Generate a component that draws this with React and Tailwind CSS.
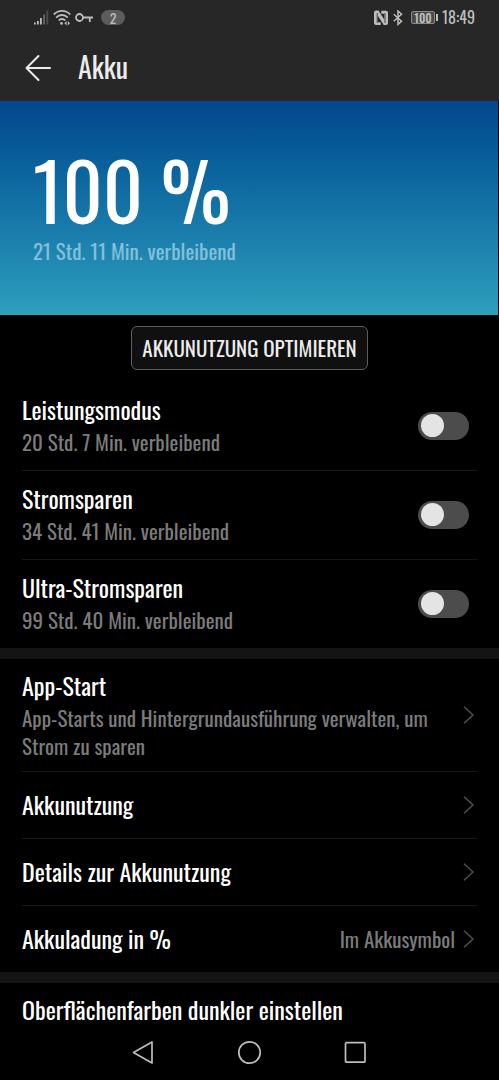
import { useState } from "react";

const MODES = [
	{ id: "performance", title: "Leistungsmodus", remaining: "20 Std. 7 Min. verbleibend" },
	{ id: "saver", title: "Stromsparen", remaining: "34 Std. 41 Min. verbleibend" },
	{ id: "ultra", title: "Ultra-Stromsparen", remaining: "99 Std. 40 Min. verbleibend" },
];

function SignalIcon() {
	return (
		<svg className="h-4 w-4" viewBox="0 0 16 16" fill="#bdbdbd" aria-hidden="true">
			<rect x="1" y="12.5" width="1.8" height="2" />
			<rect x="4" y="11" width="1.8" height="3.5" />
			<rect x="7" y="8" width="1.8" height="6.5" />
			<rect x="10.2" y="4.5" width="1.8" height="10" fill="#666" />
			<rect x="13.4" y="0.5" width="1.8" height="14" fill="#4c4c4c" />
		</svg>
	);
}

function WifiIcon() {
	return (
		<svg className="h-4 w-[18px]" viewBox="0 0 18 16" fill="none" stroke="#bdbdbd" strokeWidth="1.8" aria-hidden="true">
			<path d="M.8 4.500C5.500-.3 12.500-.3 17.200 4.500" />
			<path d="M3.200 7.600c3.300-3.500 8.300-3.500 11.600 0" />
			<path d="M5.700 10.500c1.900-2 4.700-2 6.600 0" />
			<circle cx="8.500" cy="13.400" r="1.400" fill="#bdbdbd" stroke="none" />
			<path d="M13.600 11v4.400l-2.200-2.200zM14.800 11l2.200 2.200-2.200 2.200z" fill="#bdbdbd" stroke="none" />
		</svg>
	);
}

function KeyIcon() {
	return (
		<svg className="h-4 w-[18px]" viewBox="0 0 18 16" fill="none" stroke="#bdbdbd" strokeWidth="1.8" aria-hidden="true">
			<circle cx="4.500" cy="7.500" r="3.500" />
			<path d="M8 7.500h10M14.800 7.500v4.500" />
		</svg>
	);
}

function NfcIcon() {
	return (
		<svg className="h-4 w-4" viewBox="0 0 16 16" aria-hidden="true">
			<path d="M3 .5h2.500l5.700 9V3.800H8.300V.8H13Q15 .8 15 2.800V13q0 2-2 2h-2.200L4.800 5.800v6.400h2.900V15H3q-2 0-2-2V2.500q0-2 2-2z" fill="#bdbdbd" />
			<path d="M4.200 3v10M12 3v10" stroke="#272727" strokeWidth=".8" fill="none" />
		</svg>
	);
}

function BluetoothIcon() {
	return (
		<svg className="h-4 w-[10px]" viewBox="0 0 10 16" fill="none" stroke="#bdbdbd" strokeWidth="1.500" aria-hidden="true">
			<path d="M.8 4.200l7.700 7L5 14.400V1l3.500 3.200-7.700 7" />
		</svg>
	);
}

function StatusBar() {
	return (
		<div className="flex h-[35px] items-center justify-between pl-[33px] pr-6 text-[#bdbdbd]">
			<div className="flex items-center gap-1">
				<SignalIcon />
				<WifiIcon />
				<KeyIcon />
				<span className="ml-1 flex h-[15px] w-6 items-center justify-center rounded-full bg-[#5c5c5c] text-sm leading-none">2</span>
			</div>
			<div className="flex items-center gap-1">
				<NfcIcon />
				<BluetoothIcon />
				<span className="ml-1 flex items-center gap-px">
					<span className="flex h-[13px] w-6 items-center justify-center rounded-xs border border-[#8a8a8a] bg-[#4a4a4a] text-xs leading-none font-medium">
						100
					</span>
					<span className="h-[7px] w-0.5 bg-[#bdbdbd]" />
				</span>
				<span className="pb-px text-base leading-4">18:49</span>
			</div>
		</div>
	);
}

function Chevron() {
	return (
		<svg className="h-6 w-5 shrink-0" viewBox="0 0 20 24" fill="none" stroke="#4f4f4f" strokeWidth="1.500" aria-hidden="true">
			<path d="M7 3.700 16 12l-9 8.300" />
		</svg>
	);
}

function ModeRow({ mode, checked, onChange }) {
	return (
		<li className="border-b border-[#171717] last:border-b-0">
			<label htmlFor={mode.id} className="flex items-center justify-between">
				<span className="pt-2 pb-3.5">
					<span className="block text-2xl leading-[38px] text-white">{mode.title}</span>
					<span className="block text-[21px] leading-7 text-[#7b7b7b]">{mode.remaining}</span>
				</span>
				<input
					id={mode.id}
					type="checkbox"
					role="switch"
					checked={checked}
					onChange={onChange}
					className="mr-2 h-7 w-[51px] shrink-0 appearance-none rounded-full bg-[#4c4c4c] before:mt-0.5 before:ml-[3px] before:block before:size-[23px] before:rounded-full before:bg-[#e4e4e4] checked:bg-[#1c7da8] checked:before:ml-[25px]"
				/>
			</label>
		</li>
	);
}

function LinkRow({ title, value }) {
	return (
		<li className="border-b border-[#171717] last:border-b-0">
			<a href="#" className="flex h-[66px] items-center justify-between">
				<span className="pb-0.5 text-2xl leading-9 text-white">{title}</span>
				<span className="flex items-center gap-0.5 text-[21px] leading-7 text-[#7b7b7b]">
					{value}
					<Chevron />
				</span>
			</a>
		</li>
	);
}

export default function App() {
	const [active, setActive] = useState(null);

	return (
		<div className="flex h-screen flex-col bg-black font-['Oswald','Liberation_Sans_Narrow','Roboto',sans-serif]">
			<header className="bg-[#272727]">
				<StatusBar />
				<div className="flex h-[66px] items-center gap-[26px] pl-[25px]">
					<button type="button" aria-label="Zurück">
						<svg className="h-7 w-[27px]" viewBox="0 0 27 28" fill="none" stroke="#ececec" strokeWidth="2" strokeLinecap="round" strokeLinejoin="round" aria-hidden="true">
							<path d="M25 14H1.500M13.500 2l-12 12 12 12" />
						</svg>
					</button>
					<h1 className="pb-0.5 text-[28px] leading-9 text-[#ececec]">Akku</h1>
				</div>
			</header>

			<main className="flex-1 overflow-hidden">
				<section className="mr-px h-[214px] bg-linear-to-b from-[#02478d] to-[#2e9fbd] px-[33px] pt-12">
					<p className="text-[78px] leading-20 text-white">100 %</p>
					<p className="mt-2 text-[21px] leading-7 text-[#82c0dc]">21 Std. 11 Min. verbleibend</p>
				</section>

				<div className="flex justify-center pt-[11px] pb-3">
					<button type="button" className="h-11 rounded-md border border-[#5e5e5e] bg-[#101010] px-2.5 text-[21px] text-[#ececec]">
						AKKUNUTZUNG OPTIMIEREN
					</button>
				</div>

				<ul className="mx-[22px]">
					{MODES.map((mode) => (
						<ModeRow
							key={mode.id}
							mode={mode}
							checked={active === mode.id}
							onChange={() => setActive(active === mode.id ? null : mode.id)}
						/>
					))}
				</ul>

				<ul className="border-y-[11px] border-[#141414] px-[22px]">
					<li className="border-b border-[#171717]">
						<a href="#" className="flex items-center justify-between">
							<span className="pt-[7px] pb-[11px]">
								<span className="block text-2xl leading-[38px] text-white">App-Start</span>
								<span className="block max-w-[420px] text-[21px] leading-7 text-[#7b7b7b]">
									App-Starts und Hintergrundausführung verwalten, um Strom zu sparen
								</span>
							</span>
							<Chevron />
						</a>
					</li>
					<LinkRow title="Akkunutzung" />
					<LinkRow title="Details zur Akkunutzung" />
					<LinkRow title="Akkuladung in %" value="Im Akkusymbol" />
				</ul>

				<a href="#" className="block px-[22px] pt-2 text-2xl leading-9 text-white">
					Oberflächenfarben dunkler einstellen
				</a>
			</main>

			<nav className="flex h-[51px] items-center justify-center gap-20 bg-black pb-1">
				<button type="button" aria-label="Zurück">
					<svg className="size-[26px]" viewBox="0 0 26 26" fill="none" stroke="#bdbdbd" strokeWidth="1.700" strokeLinejoin="round" aria-hidden="true">
						<path d="M21 2v21L2.500 12.500z" />
					</svg>
				</button>
				<button type="button" aria-label="Startbildschirm">
					<svg className="size-[26px]" viewBox="0 0 26 26" fill="none" stroke="#bdbdbd" strokeWidth="1.700" aria-hidden="true">
						<circle cx="12.500" cy="12.500" r="10.700" />
					</svg>
				</button>
				<button type="button" aria-label="Letzte Apps">
					<svg className="size-[26px]" viewBox="0 0 26 26" fill="none" stroke="#bdbdbd" strokeWidth="1.700" aria-hidden="true">
						<rect x="2.500" y="2.700" width="19.500" height="19.500" rx="1" />
					</svg>
				</button>
			</nav>
		</div>
	);
}
